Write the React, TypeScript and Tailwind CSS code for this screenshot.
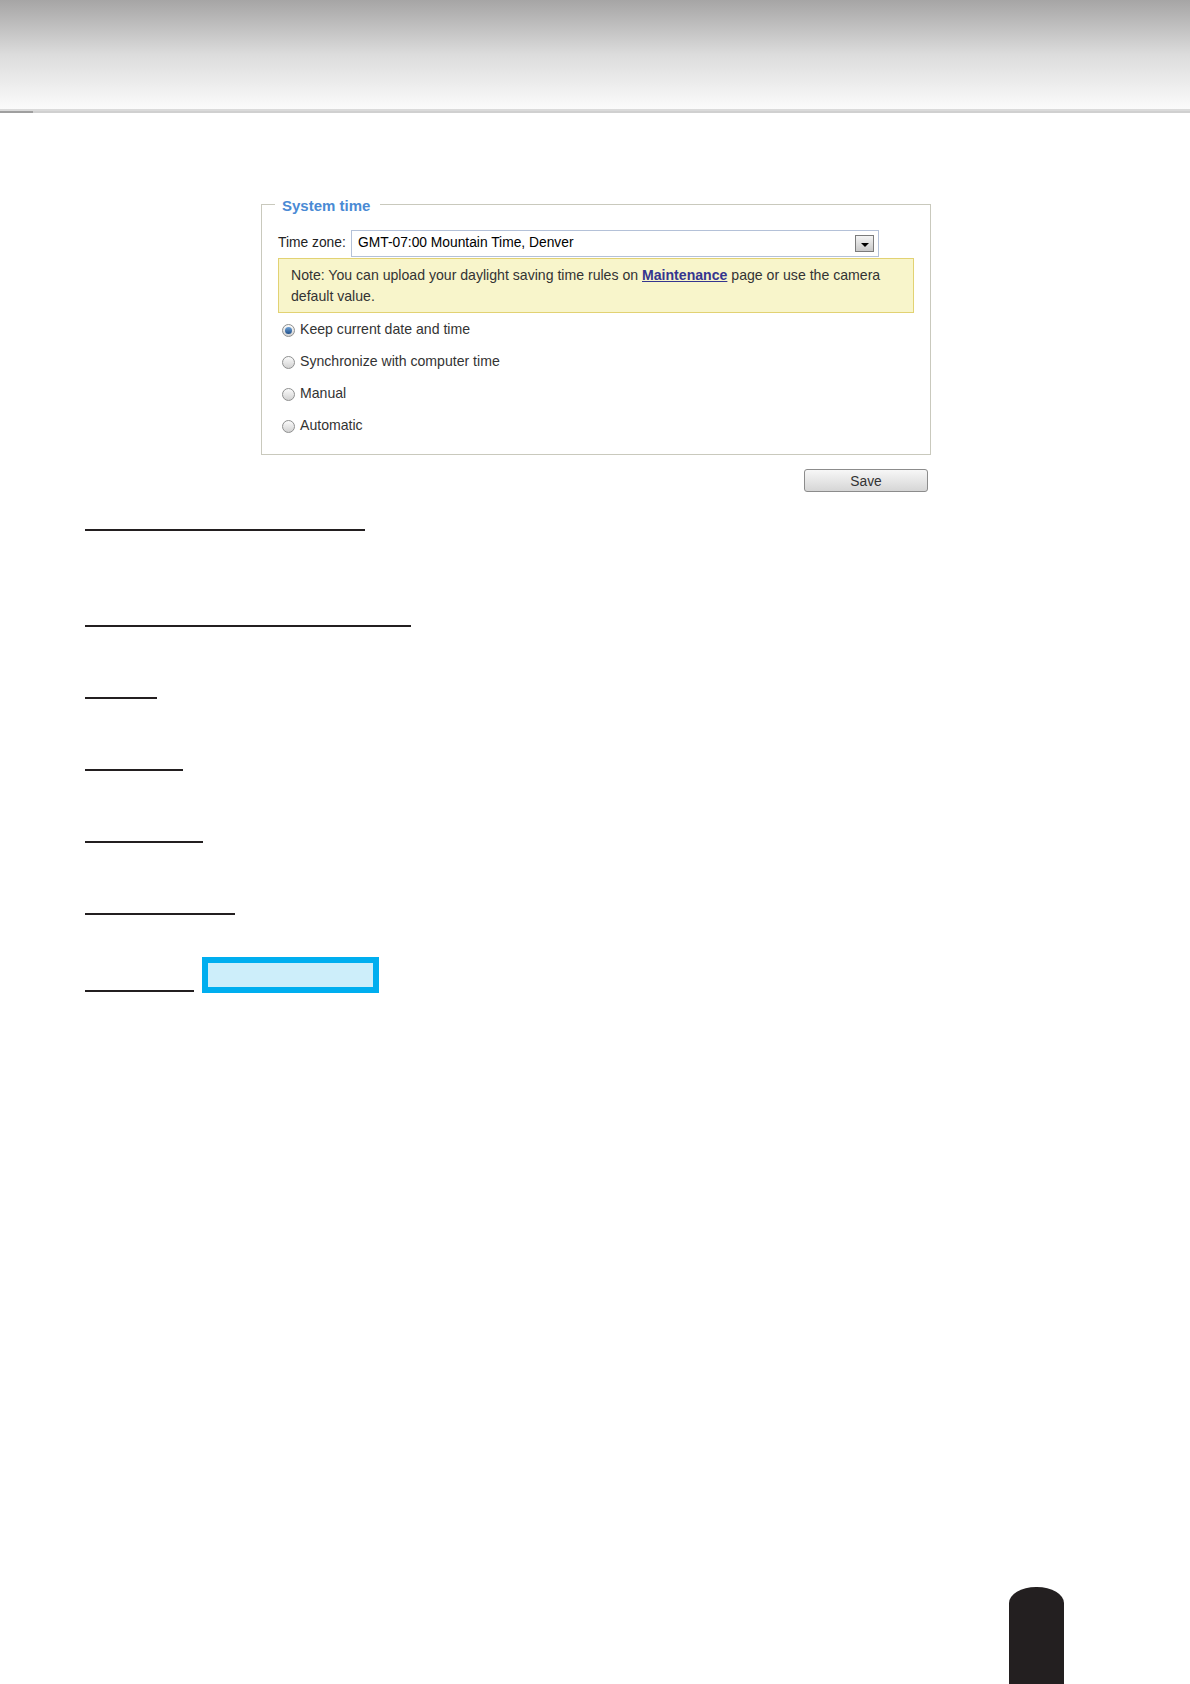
import React from 'react';

const options = [
  { label: 'Keep current date and time', checked: true },
  { label: 'Synchronize with computer time', checked: false },
  { label: 'Manual', checked: false },
  { label: 'Automatic', checked: false },
];

// blank heading rules below the screenshot (width, top gap)
const rules = [
  { w: 'w-[280px]', mt: 'mt-[37px]' },
  { w: 'w-[326px]', mt: 'mt-[94px]' },
  { w: 'w-[72px]', mt: 'mt-[70px]' },
  { w: 'w-[98px]', mt: 'mt-[70px]' },
  { w: 'w-[118px]', mt: 'mt-[70px]' },
  { w: 'w-[150px]', mt: 'mt-[70px]' },
];

const Radio = ({ checked }: { checked: boolean }) => (
  <span className="flex h-[13px] w-[13px] items-center justify-center rounded-full border border-[#8e8f8f] bg-linear-to-b from-[#fbfbfb] to-[#d2d2d2]">
    {checked && (
      <span className="h-[7px] w-[7px] rounded-full bg-linear-to-b from-[#6fa2d6] to-[#1f4f8a]" />
    )}
  </span>
);

const App = () => {
  return (
    <div className="flex min-h-[1684px] flex-col bg-white font-['Liberation_Sans',Arial,sans-serif]">
      {/* header band */}
      <div className="h-[109px] bg-linear-to-b from-[#a6a5a5] via-[#dcdcdc] to-[#fbfbfb]" />
      <div className="h-[2px] bg-[#dadada]" />
      <div className="flex h-[2px]">
        <div className="w-[33px] bg-[#9f9f9f]" />
        <div className="flex-1 bg-[#d0d0d0]" />
      </div>

      {/* system time panel */}
      <div className="ml-[261px] mt-[82px] w-[670px]">
        <fieldset className="border border-[#c9c9bd]">
          <legend className="ml-[13px] h-[18px] pl-[7px] pr-[10px] text-[15px] font-bold leading-[22px] text-[#4a8ad4]">
            System time
          </legend>
          <div className="px-[16px] pb-[12px]">
            <div className="mt-[17px] flex h-[27px] items-center text-[13.8px] text-[#222]">
              <span className="w-[73px]">Time zone:</span>
              <div className="flex h-[27px] w-[528px] items-center border border-[#b4c1d8] bg-white pl-[6px] pr-[4px]">
                <span className="text-black">GMT-07:00 Mountain Time, Denver</span>
                <span className="ml-auto flex h-[17px] w-[19px] items-end justify-center border border-[#7b7b7b] bg-linear-to-b from-[#f4f4f4] to-[#c9c9c9] pb-[4px]">
                  <span className="h-0 w-0 border-x-[4px] border-t-[4px] border-x-transparent border-t-black" />
                </span>
              </div>
            </div>

            <div className="mt-px border border-[#e2d273] bg-[#f8f5cb] px-[12px] pb-[6px] pt-[6px] text-[14.1px] leading-[20.5px] text-[#333]">
              Note: You can upload your daylight saving time rules on{' '}
              <span className="font-bold text-[#35358f] underline">Maintenance</span> page or use the camera
              default value.
            </div>

            <div className="mt-px">
              {options.map((o) => (
                <div key={o.label} className="flex h-8 items-center gap-[5px] pl-[4px] text-[14.1px] text-[#333]">
                  <Radio checked={o.checked} />
                  <span>{o.label}</span>
                </div>
              ))}
            </div>
          </div>
        </fieldset>

        <div className="mt-[14px] flex justify-end pr-[3px]">
          <button className="h-[23px] w-[124px] rounded-[3px] border border-[#8c8c8c] bg-linear-to-b from-[#f7f7f7] to-[#d6d6d6] pt-[2px] text-[13.8px] text-[#333]">
            Save
          </button>
        </div>
      </div>

      {/* heading rules */}
      <div className="pl-[85px]">
        {rules.map((r, i) => (
          <div key={i} className={`h-[2px] bg-[#231f20] ${r.w} ${r.mt}`} />
        ))}
        <div className="mt-[42px] flex items-end gap-[8px]">
          <div className="mb-px h-[2px] w-[109px] bg-[#231f20]" />
          <div className="h-[36px] w-[177px] border-[6px] border-[#00aeef] bg-[#cdeefa]" />
        </div>
      </div>

      {/* page tab */}
      <div className="mr-[126px] mt-auto h-[97px] w-[55px] self-end rounded-t-[27px_16px] bg-[#231f20]" />
    </div>
  );
};

export default App;
